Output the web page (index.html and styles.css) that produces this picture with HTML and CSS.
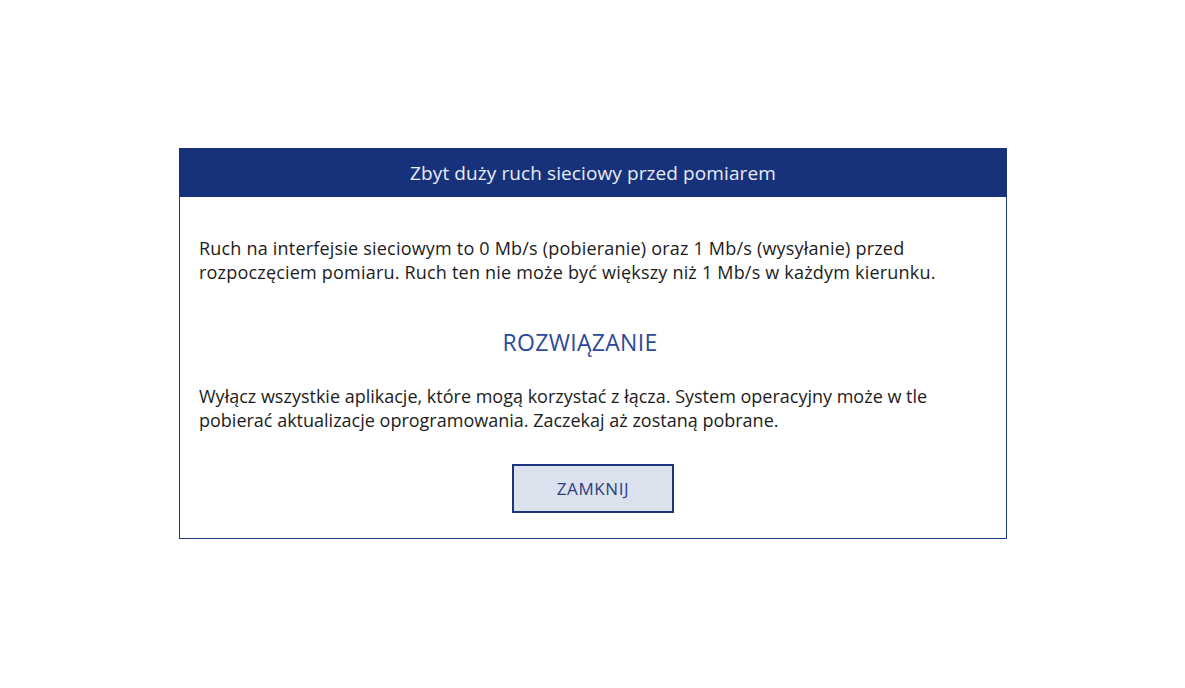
FILE: index.html
```html
<!DOCTYPE html>
<html lang="pl">
<head>
<meta charset="utf-8">
<title>Zbyt duży ruch sieciowy</title>
<link rel="stylesheet" href="styles.css">
</head>
<body>
<div class="page">
  <div class="dialog">
    <div class="dialog-header">Zbyt duży ruch sieciowy przed pomiarem</div>
    <div class="dialog-body">
      <p class="text">Ruch na interfejsie sieciowym to 0 Mb/s (pobieranie) oraz 1 Mb/s (wysyłanie) przed rozpoczęciem pomiaru. Ruch ten nie może być większy niż 1 Mb/s w każdym kierunku.</p>
      <h2 class="solution">ROZWIĄZANIE</h2>
      <p class="text">Wyłącz wszystkie aplikacje, które mogą korzystać z łącza. System operacyjny może w tle pobierać aktualizacje oprogramowania. Zaczekaj aż zostaną pobrane.</p>
      <div class="actions"><button class="close-btn">ZAMKNIJ</button></div>
    </div>
  </div>
</div>
</body>
</html>
```
FILE: styles.css
```css
html, body {
  margin: 0;
  padding: 0;
  background: #ffffff;
}
body {
  font-family: "Open Sans", "Noto Sans", sans-serif;
}
.page {
  width: 1185px;
  height: 688px;
  padding: 148px 0 0 179px;
  box-sizing: border-box;
  display: flex;
}
.dialog {
  width: 828px;
  height: 391px;
  box-sizing: border-box;
  border: 1px solid #1e3a8a;
  border-top: none;
  display: flex;
  flex-direction: column;
}
.dialog-header {
  height: 49px;
  flex: none;
  background: #17327a;
  color: #e8ecf5;
  font-size: 19px;
  letter-spacing: 0.1px;
  display: flex;
  align-items: center;
  justify-content: center;
  margin: 0 -1px;
}
.dialog-body {
  padding: 39px 19px 0 19px;
}
.text {
  margin: 0;
  font-size: 18px;
  line-height: 24px;
  color: #1c1c1c;
}
.text:first-child {
  letter-spacing: 0.2px;
}
.solution {
  margin: 45px 0 29px;
  padding-right: 26px;
  text-align: center;
  font-weight: 400;
  font-size: 23px;
  letter-spacing: 0.3px;
  line-height: 26px;
  color: #2d4a9a;
}
.actions {
  display: flex;
  justify-content: center;
  margin-top: 32px;
}
.close-btn {
  width: 162px;
  height: 49px;
  box-sizing: border-box;
  background: #dce1ee;
  border: 2px solid #1b3580;
  color: #2c3f7f;
  font-family: inherit;
  font-size: 17px;
  letter-spacing: 0.6px;
  padding: 0;
}
```
